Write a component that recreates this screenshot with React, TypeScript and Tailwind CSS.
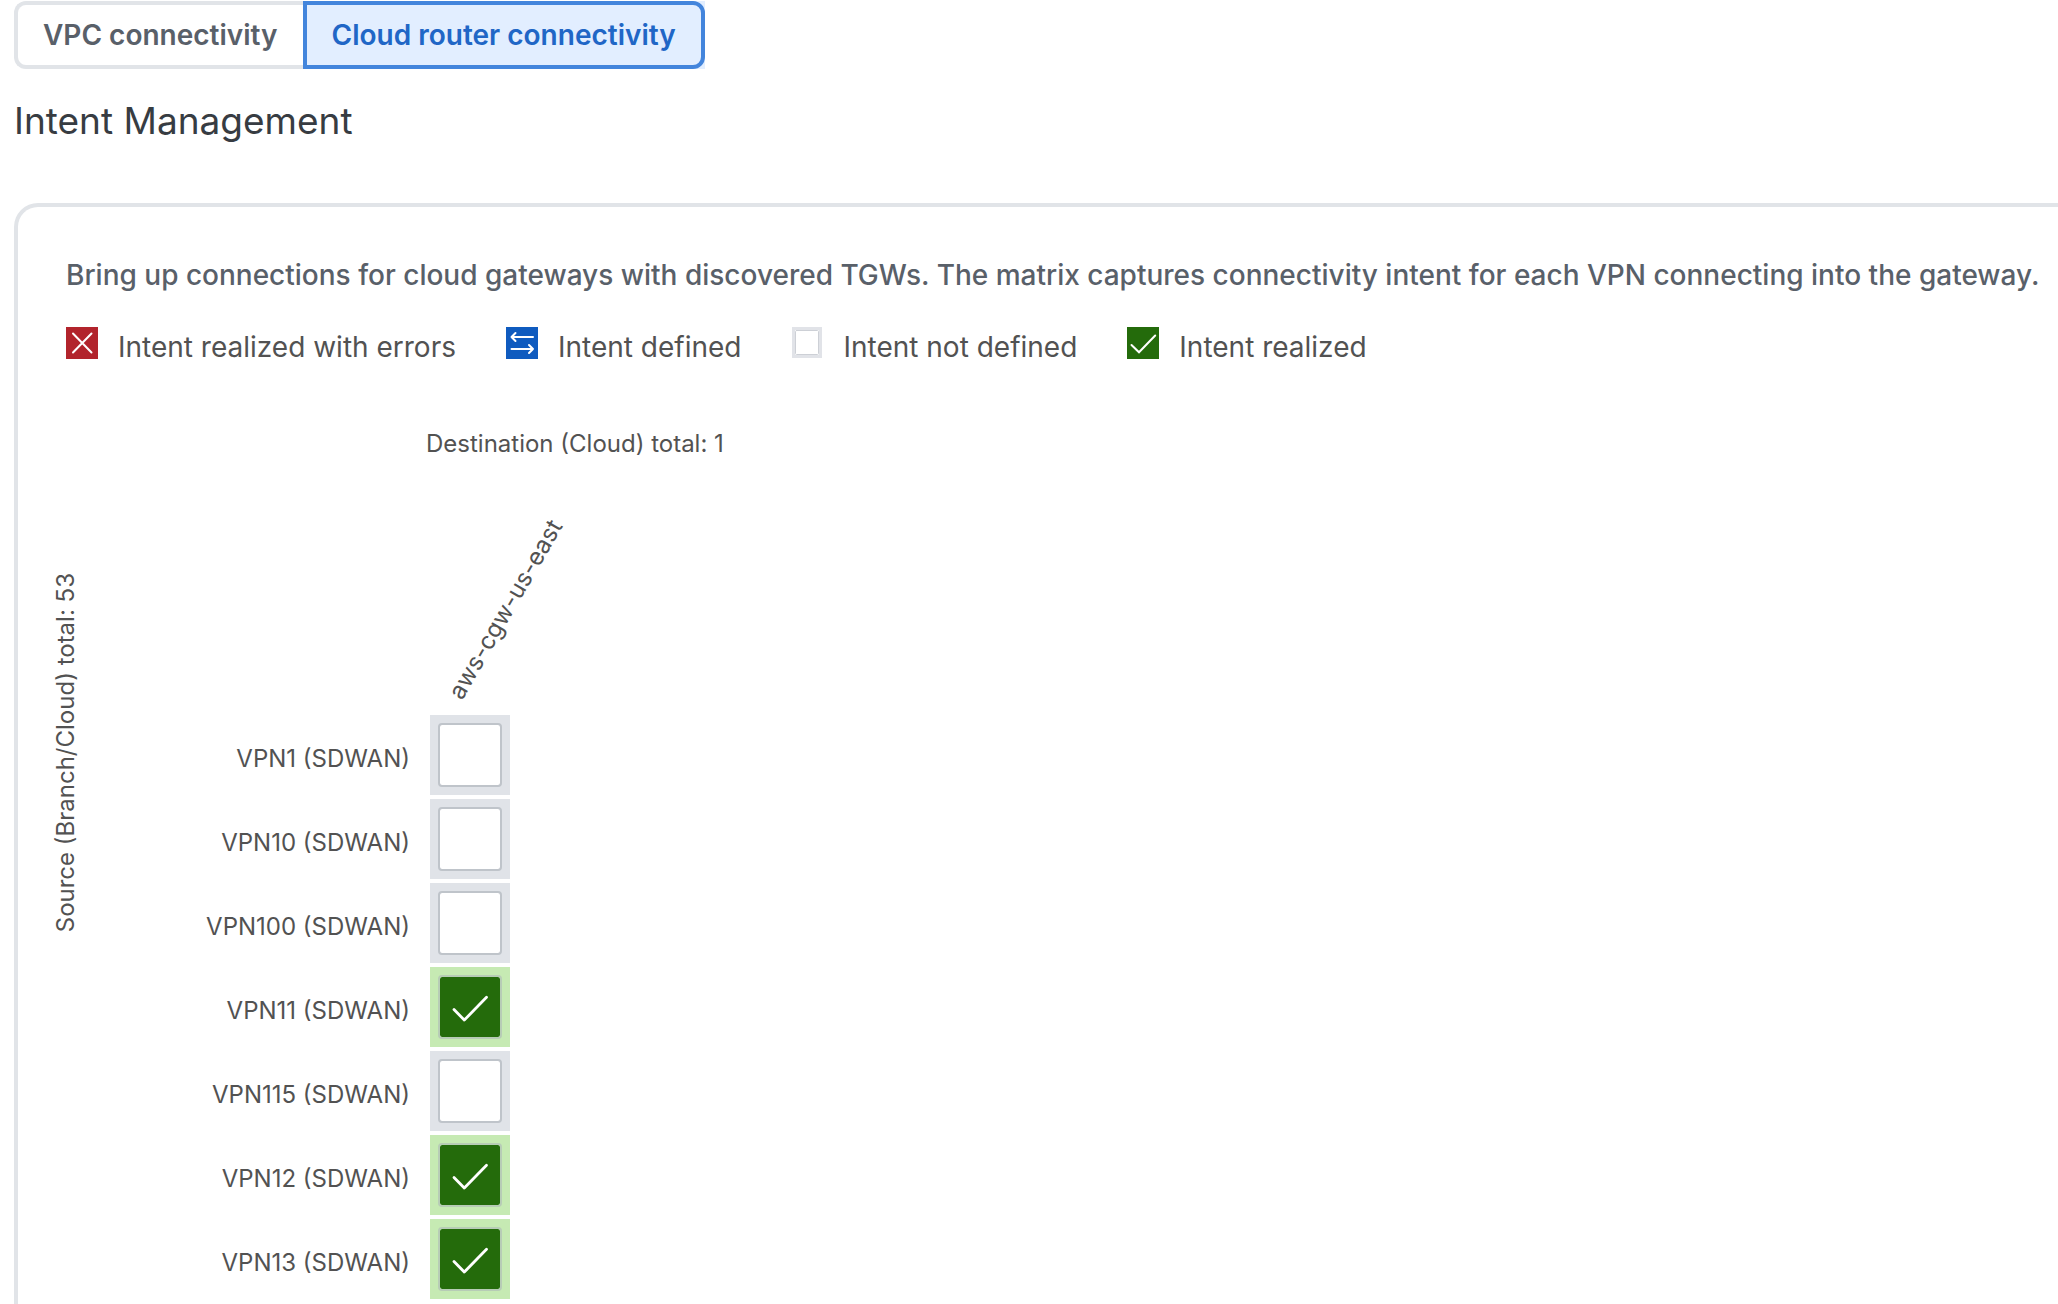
import { useState } from 'react'
import clsx from 'clsx'

type Status = 'error' | 'defined' | 'none' | 'realized'

interface Row {
  vpn: string
  realized: boolean
}

const TABS = [
  { key: 'vpc', label: 'VPC connectivity' },
  { key: 'router', label: 'Cloud router connectivity' },
]

const LEGEND: { status: Status; label: string }[] = [
  { status: 'error', label: 'Intent realized with errors' },
  { status: 'defined', label: 'Intent defined' },
  { status: 'none', label: 'Intent not defined' },
  { status: 'realized', label: 'Intent realized' },
]

const ROWS: Row[] = [
  { vpn: 'VPN1', realized: false },
  { vpn: 'VPN10', realized: false },
  { vpn: 'VPN100', realized: false },
  { vpn: 'VPN11', realized: true },
  { vpn: 'VPN115', realized: false },
  { vpn: 'VPN12', realized: true },
  { vpn: 'VPN13', realized: true },
]

function StatusIcon({ status }: { status: Status }) {
  return (
    <svg viewBox="0 0 32 32" className="w-8 h-8 flex-shrink-0" fill="none" stroke="#fff" strokeWidth="2" strokeLinecap="round" aria-hidden="true">
      {status === 'error' && (
        <>
          <rect width="32" height="32" fill="#b2242c" stroke="none" />
          <path d="M7 6.5 25.5 25.5M25.5 6.5 7 25.5" />
        </>
      )}
      {status === 'defined' && (
        <>
          <rect width="32" height="32" fill="#0f5bbf" stroke="none" />
          <path d="M27 10H5.5M9.5 6 5.5 10l4 4M5.5 22H27M23 18l4 4-4 4" strokeLinejoin="round" />
        </>
      )}
      {status === 'none' && (
        <>
          <rect x="2.5" y="1.5" width="27" height="28" fill="#fff" stroke="#e1e3e8" strokeWidth="3" />
          <rect x="4.5" y="3.5" width="23" height="24" rx="1" stroke="#cdd0d6" strokeWidth="1" />
        </>
      )}
      {status === 'realized' && (
        <>
          <rect width="32" height="32" fill="#246b0b" stroke="none" />
          <path d="M4.5 18 12 25.3 28.2 8.5" />
        </>
      )}
    </svg>
  )
}

function MatrixCell({ id, checked, onChange }: { id: string; checked: boolean; onChange: () => void }) {
  return (
    <div className={clsx('relative w-20 h-20 p-2', checked ? 'bg-[#c6eab3]' : 'bg-[#e0e3e8]')}>
      <input
        id={id}
        type="checkbox"
        checked={checked}
        onChange={onChange}
        className={clsx(
          'block w-16 h-16 appearance-none rounded border-2 bg-clip-padding cursor-pointer',
          checked ? 'border-[#b7ccb6] bg-[#246b0b]' : 'border-[#bfc4ca] bg-white',
        )}
      />
      {checked && (
        <svg viewBox="0 0 64 64" className="absolute inset-2 w-16 h-16 pointer-events-none" fill="none" stroke="#fff" strokeWidth="2.8" aria-hidden="true">
          <path d="M16 34.5 26.3 45.1 48.5 22.3" strokeLinecap="round" strokeLinejoin="round" />
        </svg>
      )}
    </div>
  )
}

export default function App() {
  const [tab, setTab] = useState('router')
  const [rows, setRows] = useState(ROWS)

  function toggle(vpn: string) {
    setRows((prev) => prev.map((r) => (r.vpn === vpn ? { ...r, realized: !r.realized } : r)))
  }

  return (
    <main className="min-h-screen flex flex-col pl-3.5 pt-px bg-white font-['Inter',sans-serif] text-[#525252]">
      {/* Tabs */}
      <div className="flex flex-shrink-0">
        {TABS.map(({ key, label }, i) => {
          const active = tab === key
          return (
            <div key={key} className={clsx(active && 'bg-[#e2eeff]')}>
              <button
                type="button"
                onClick={() => setTab(key)}
                className={clsx(
                  'block h-17 px-[25px] border-4 text-[28px] leading-[60px] font-semibold whitespace-nowrap',
                  i === 0 ? 'rounded-l-xl' : 'rounded-r-xl',
                  active ? 'border-[#4385dc] bg-[#e2eeff] text-[#2066c6]' : 'border-[#e1e4e8] bg-white text-[#596069]',
                  !active && (i === 0 ? 'border-r-0' : 'border-l-0'),
                )}
              >
                {label}
              </button>
            </div>
          )
        })}
      </div>

      <h1 className="mt-7 text-[37px] leading-12 text-[#373c42]">Intent Management</h1>

      <section className="mt-[58px] flex-1 border-t-4 border-l-4 border-[#e1e4e8] rounded-tl-3xl pl-12 pt-12">
        <p className="text-[28px] leading-10 font-medium text-[#596069] whitespace-nowrap">
          Bring up connections for cloud gateways with discovered TGWs. The matrix captures connectivity intent for each VPN connecting into the gateway.
        </p>

        {/* Legend */}
        <ul className="mt-8 flex gap-[50px]">
          {LEGEND.map(({ status, label }) => (
            <li key={status} className="flex items-start gap-5">
              <StatusIcon status={status} />
              <span className="text-[28px] leading-10 whitespace-nowrap">{label}</span>
            </li>
          ))}
        </ul>

        <p className="mt-[61px] ml-[360px] text-[24px] leading-8">Destination (Cloud) total: 1</p>

        {/* Matrix */}
        <div className="flex items-start">
          <p className="-ml-4 mt-[113px] [writing-mode:vertical-rl] rotate-180 text-[24px] leading-8 whitespace-nowrap">
            Source (Branch/Cloud) total: 53
          </p>
          <table className="ml-[108px] border-separate border-spacing-x-0 border-spacing-y-1">
            <thead>
              <tr>
                <td className="w-60" />
                <th className="relative h-[247px] p-0 text-[24px] leading-8 font-normal">
                  <span className="absolute left-[39px] bottom-1.5 origin-bottom-left -rotate-60 whitespace-nowrap">aws-cgw-us-east</span>
                </th>
              </tr>
            </thead>
            <tbody>
              {rows.map(({ vpn, realized }) => (
                <tr key={vpn}>
                  <th className="p-0 pt-2 pr-5 text-right text-[24px] leading-8 font-normal whitespace-nowrap">
                    <label htmlFor={vpn}>{vpn} (SDWAN)</label>
                  </th>
                  <td className="p-0">
                    <MatrixCell id={vpn} checked={realized} onChange={() => toggle(vpn)} />
                  </td>
                </tr>
              ))}
            </tbody>
          </table>
        </div>
      </section>
    </main>
  )
}
